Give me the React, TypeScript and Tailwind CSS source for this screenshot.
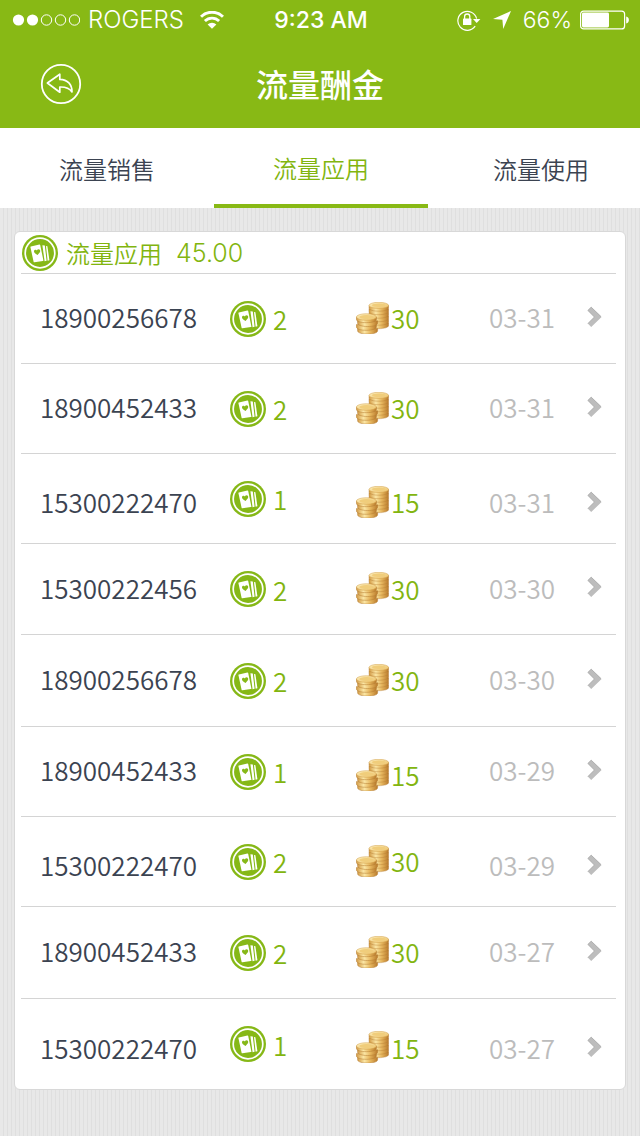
type Entry = {
  phone: string;
  count: number;
  coins: number;
  date: string;
  height: string;
};

const entries: Entry[] = [
  { phone: "18900256678", count: 2, coins: 30, date: "03-31", height: "h-[90px]" },
  { phone: "18900452433", count: 2, coins: 30, date: "03-31", height: "h-[90px]" },
  { phone: "15300222470", count: 1, coins: 15, date: "03-31", height: "h-[90px]" },
  { phone: "15300222456", count: 2, coins: 30, date: "03-30", height: "h-[91px]" },
  { phone: "18900256678", count: 2, coins: 30, date: "03-30", height: "h-[92px]" },
  { phone: "18900452433", count: 1, coins: 15, date: "03-29", height: "h-[90px]" },
  { phone: "15300222470", count: 2, coins: 30, date: "03-29", height: "h-[90px]" },
  { phone: "18900452433", count: 2, coins: 30, date: "03-27", height: "h-[92px]" },
  { phone: "15300222470", count: 1, coins: 15, date: "03-27", height: "h-[90px]" },
];

const tabs = ["流量销售", "流量应用", "流量使用"];

function CardBadge() {
  return (
    <svg className="size-9 shrink-0" viewBox="0 0 36 36" aria-hidden="true">
      <circle cx="18" cy="18" r="18" fill="#86b817" />
      <circle cx="18" cy="18" r="14.8" fill="none" stroke="#fff" strokeWidth="1.7" />
      <path d="M24 11 25.4 11.2 27.4 25.2 25.6 25.8Z" fill="#fff" />
      <path d="M20.4 10.2 22.8 10.4 24.6 25.8 22.6 26.2Z" fill="#fff" />
      <path
        d="M8.4 12.1Q8.3 11.5 8.9 11.4L17.4 9.5Q18 9.4 18.2 10L21.4 25.4Q21.5 26 20.9 26.1L12.4 27.3Q11.8 27.4 11.6 26.8Z"
        fill="#fff"
      />
      <path d="M15.6 19.9c-2.5-1.2-3.9-2.3-3.6-3.9.3-1.6 2.2-1.8 2.9-.6.5-1.4 2.6-1.5 3.2-.1.5 1.6-.7 2.8-2.5 4.6Z" fill="#86b817" />
    </svg>
  );
}

const backStack = [29.5, 26, 22.5, 19, 15.5, 12, 8.5];
const frontStack = [28.4, 24.6, 20.8, 17];

function Coins() {
  return (
    <svg className="h-8 w-[33px] shrink-0" viewBox="0 0 33 32" aria-hidden="true">
      <defs>
        <linearGradient id="coinEdge">
          <stop offset="0" stopColor="#d29a45" />
          <stop offset=".35" stopColor="#fbe6a4" />
          <stop offset=".65" stopColor="#e6b65e" />
          <stop offset="1" stopColor="#b97a2c" />
        </linearGradient>
        <linearGradient id="coinTop" x2="1" y2="1">
          <stop offset="0" stopColor="#fdf0be" />
          <stop offset="1" stopColor="#ecc067" />
        </linearGradient>
      </defs>
      {backStack.map((y) => (
        <path
          key={y}
          d={`M13 ${y - 5}v2.6c0 1.8 4.3 3.1 9.8 3.1s9.8-1.3 9.8-3.1v-2.6Z`}
          fill="url(#coinEdge)"
          stroke="#b37a30"
          strokeWidth=".4"
        />
      )).slice(1)}
      <ellipse cx="22.8" cy="3.4" rx="9.8" ry="3.1" fill="url(#coinTop)" stroke="#d3a04b" strokeWidth=".5" />
      <ellipse cx="22.8" cy="3.3" rx="6.8" ry="1.7" fill="#f0cd7b" />
      {frontStack.map((y, i) => (
        <path
          key={y}
          d={`M${i % 2 ? 0.4 : 1.6} ${y - 2}v2.4c0 2 4.4 3.3 10 3.3s10-1.3 10-3.3v-2.4Z`}
          fill="url(#coinEdge)"
          stroke="#b37a30"
          strokeWidth=".5"
        />
      ))}
      <ellipse cx="10.4" cy="15" rx="10" ry="3.3" fill="url(#coinTop)" stroke="#d3a04b" strokeWidth=".5" />
      <ellipse cx="10.4" cy="15" rx="7" ry="1.9" fill="#f0cd7b" />
    </svg>
  );
}

function Chevron() {
  return (
    <svg className="h-[22px] w-4" viewBox="0 0 16 22" aria-hidden="true">
      <path d="M.8 4.4 4.2 1 14.6 11 4.2 21 .8 17.6 7.4 11Z" fill="#bdbdbd" />
      <path d="M.9 4.4 4.2 1.2 14 10.6M.9 17.6 7.4 11 .9 4.4" fill="none" stroke="#a8a8a8" strokeWidth=".8" />
    </svg>
  );
}

function StatusBar() {
  return (
    <div className="grid h-10 grid-cols-[1fr_auto_1fr] items-center pr-[10px] pl-3 font-['Inter','Liberation_Sans',sans-serif] text-2xl text-white">
      <div className="flex items-center gap-2">
        <svg className="h-3 w-[68px]" viewBox="0 0 68 12" aria-hidden="true">
          <circle cx="6.5" cy="6" r="5.6" fill="#fff" />
          <circle cx="20.5" cy="6" r="5.6" fill="#fff" />
          <g fill="none" stroke="#fff">
            <circle cx="34.5" cy="6" r="5.2" />
            <circle cx="48.5" cy="6" r="5.2" />
            <circle cx="62.5" cy="6" r="5.2" />
          </g>
        </svg>
        <span className="font-light">ROGERS</span>
        <svg className="ml-2 h-[18px] w-6" viewBox="0 0 24 18" aria-hidden="true">
          <path d="M1 5.8a15.6 15.6 0 0 1 22 0" fill="none" stroke="#fff" strokeWidth="3" />
          <path d="M4.9 10a10 10 0 0 1 14.2 0" fill="none" stroke="#fff" strokeWidth="2.8" />
          <path d="M7.6 13.4a6.4 6.4 0 0 1 8.8 0L12 17.8Z" fill="#fff" />
        </svg>
      </div>
      <span className="text-[23px] font-medium">9:23 AM</span>
      <div className="flex items-center justify-end">
        <svg className="mr-3 h-[22px] w-6" viewBox="0 0 24 22" aria-hidden="true">
          <path d="M18.2 17.2A9.5 9.5 0 1 1 19.6 9.6" fill="none" stroke="#fff" strokeWidth="1.2" />
          <path d="M16 10h7.4l-3.7 4Z" fill="#fff" />
          <rect x="6" y="9.6" width="8.4" height="6.4" rx=".6" fill="#fff" />
          <path d="M7.6 10V7.6a2.6 2.6 0 0 1 5.2 0V10" fill="none" stroke="#fff" strokeWidth="1.3" />
        </svg>
        <svg className="mr-3 size-[18px]" viewBox="0 0 18 18" aria-hidden="true">
          <path d="M18 0 10.2 18 9.4 8.8 0 8Z" fill="#fff" />
        </svg>
        <span className="mr-2 text-[23px] font-light">66%</span>
        <svg className="h-5 w-[50px]" viewBox="0 0 50 20" aria-hidden="true">
          <rect x=".6" y="1.1" width="44" height="17.8" rx="3" fill="none" stroke="#fff" strokeWidth="1.2" />
          <rect x="2" y="2.6" width="27" height="14.8" rx="1.4" fill="#fff" />
          <path d="M46.2 6.6c3.6.4 3.6 6.4 0 6.8Z" fill="#fff" />
        </svg>
      </div>
    </div>
  );
}

export default function App() {
  return (
    <div className="min-h-screen bg-[repeating-linear-gradient(90deg,#e8e8e8_0px,#e8e8e8_3px,#dfdfdf_3px,#dfdfdf_4px)] font-['Noto_Sans_CJK_SC',sans-serif] text-[#3b4351]">
      <header className="bg-[#88b915] text-white">
        <StatusBar />
        <div className="grid h-[88px] grid-cols-[1fr_auto_1fr] items-center px-10">
          <button type="button" aria-label="返回" className="size-[42px]">
            <svg viewBox="0 0 42 42" fill="none" stroke="#fff" aria-hidden="true">
              <circle cx="21" cy="21" r="19.2" strokeWidth="1.8" />
              <path
                d="M7.4 20 19.8 11.2v5.2c7.8.2 12.4 5 12.2 12.6-2.4-3.6-6.4-5.2-12.2-5v5.2Z"
                strokeWidth="1.7"
                strokeLinejoin="round"
              />
            </svg>
          </button>
          <h1 className="pb-[2px] text-[32px] leading-none font-medium">流量酬金</h1>
        </div>
      </header>

      <nav className="grid h-20 grid-cols-[214fr_214fr_212fr] bg-white text-2xl font-[350]">
        {tabs.map((tab, i) => (
          <button
            key={tab}
            type="button"
            className={
              i === 1
                ? "border-b-4 border-[#88b915] pt-1 text-[#82b50f]"
                : "pt-[2px] last:pl-[14px]"
            }
          >
            {tab}
          </button>
        ))}
      </nav>

      <main className="px-[14px] py-[23px]">
        <section className="rounded-md border border-[#d8d8d8] bg-white pr-[9px] pl-[6px]">
          <h2 className="flex h-[42px] items-center border-b border-[#d4d4d4] pl-px text-2xl font-[350] text-[#82b50f]">
            <CardBadge />
            <span className="ml-2">流量应用</span>
            <span className="ml-[14px] pt-[2px] font-['Inter','Liberation_Sans',sans-serif] text-[25px] font-light">
              45.00
            </span>
          </h2>
          <ul className="divide-y divide-[#d4d4d4] text-[26px] font-[350]">
            {entries.map((entry, i) => {
              const phoneShift = entry.phone === "15300222470" ? "pt-[6px]" : "pb-1";
              const coinShift = entry.count === 1 ? "pt-[6px]" : "pb-[2px]";
              return (
                <li key={i} className={entry.height}>
                  <a
                    href="#detail"
                    className="grid h-full grid-cols-[190fr_126fr_133fr_98fr_29fr] items-center pl-[19px]"
                  >
                    <span className={phoneShift}>{entry.phone}</span>
                    <span className="flex items-center gap-[7px] text-[#82b50f]">
                      <CardBadge />
                      {entry.count}
                    </span>
                    <span className={`flex items-center gap-[2px] text-[#82b50f] ${coinShift}`}>
                      <Coins />
                      {entry.coins}
                    </span>
                    <span className={`text-[#bcbcbc] ${phoneShift}`}>{entry.date}</span>
                    <span className={phoneShift}>
                      <Chevron />
                    </span>
                  </a>
                </li>
              );
            })}
          </ul>
        </section>
      </main>
    </div>
  );
}
